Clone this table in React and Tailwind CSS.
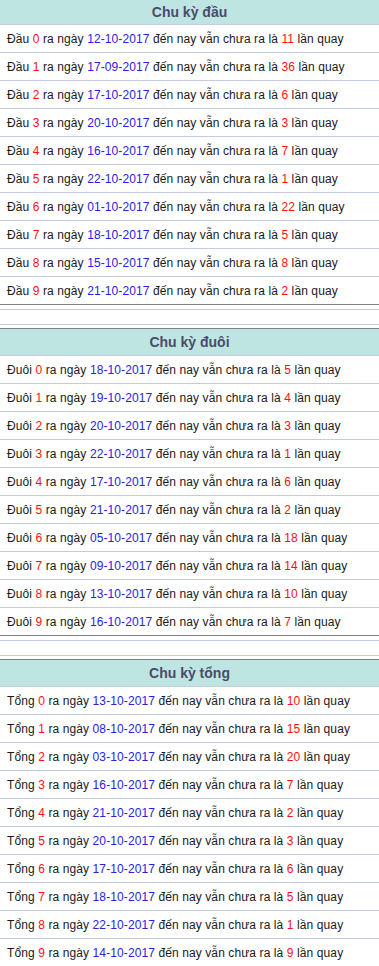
import React from "react";

const sections = [
  {
    title: "Chu kỳ đầu",
    label: "Đầu",
    rows: [
      ["12-10-2017", "11"],
      ["17-09-2017", "36"],
      ["17-10-2017", "6"],
      ["20-10-2017", "3"],
      ["16-10-2017", "7"],
      ["22-10-2017", "1"],
      ["01-10-2017", "22"],
      ["18-10-2017", "5"],
      ["15-10-2017", "8"],
      ["21-10-2017", "2"],
    ],
  },
  {
    title: "Chu kỳ đuôi",
    label: "Đuôi",
    rows: [
      ["18-10-2017", "5"],
      ["19-10-2017", "4"],
      ["20-10-2017", "3"],
      ["22-10-2017", "1"],
      ["17-10-2017", "6"],
      ["21-10-2017", "2"],
      ["05-10-2017", "18"],
      ["09-10-2017", "14"],
      ["13-10-2017", "10"],
      ["16-10-2017", "7"],
    ],
  },
  {
    title: "Chu kỳ tổng",
    label: "Tổng",
    rows: [
      ["13-10-2017", "10"],
      ["08-10-2017", "15"],
      ["03-10-2017", "20"],
      ["16-10-2017", "7"],
      ["21-10-2017", "2"],
      ["20-10-2017", "3"],
      ["17-10-2017", "6"],
      ["18-10-2017", "5"],
      ["22-10-2017", "1"],
      ["14-10-2017", "9"],
    ],
  },
];

function Section({ s, first, last }) {
  return (
    <div className={first ? "" : "border-t border-[#7f7f87]"}>
      <div
        className={
          (first ? "h-[25px] " : "h-[27px] ") +
          "bg-[#bfe5e3] border-b border-[#c3cbe3] flex items-center justify-center text-[14px] font-bold text-[#474c6c]"
        }
      >
        {s.title}
      </div>
      {s.rows.map((r, i) => (
        <div
          key={i}
          className={
            "h-[28px] flex items-center pl-[7px] text-[12px] tracking-[0.1px] text-[#1a1a1a] whitespace-nowrap " +
            (i === s.rows.length - 1
              ? last
                ? ""
                : "border-b border-[#7f7f87]"
              : "border-b border-[#c3cbe3]")
          }
        >
          <span>
            {s.label} <span className="text-[#ff1010]">{i}</span> ra ngày{" "}
            <span className="text-[#2a22e0]">{r[0]}</span> đến nay vẫn chưa ra là{" "}
            <span className="text-[#ff1010]">{r[1]}</span> lần quay
          </span>
        </div>
      ))}
      {!last && (
        <div className="pt-[4px]">
          <div className="border-t border-[#c3cbe3] h-[15px]" />
          <div className="border-t border-[#c3cbe3] h-[4px]" />
        </div>
      )}
    </div>
  );
}

export default function App() {
  return (
    <div
      className="w-[379px] h-[966px] bg-white overflow-hidden"
      style={{ fontFamily: '"Liberation Sans", Arial, sans-serif' }}
    >
      {sections.map((s, i) => (
        <Section key={i} s={s} first={i === 0} last={i === sections.length - 1} />
      ))}
    </div>
  );
}
